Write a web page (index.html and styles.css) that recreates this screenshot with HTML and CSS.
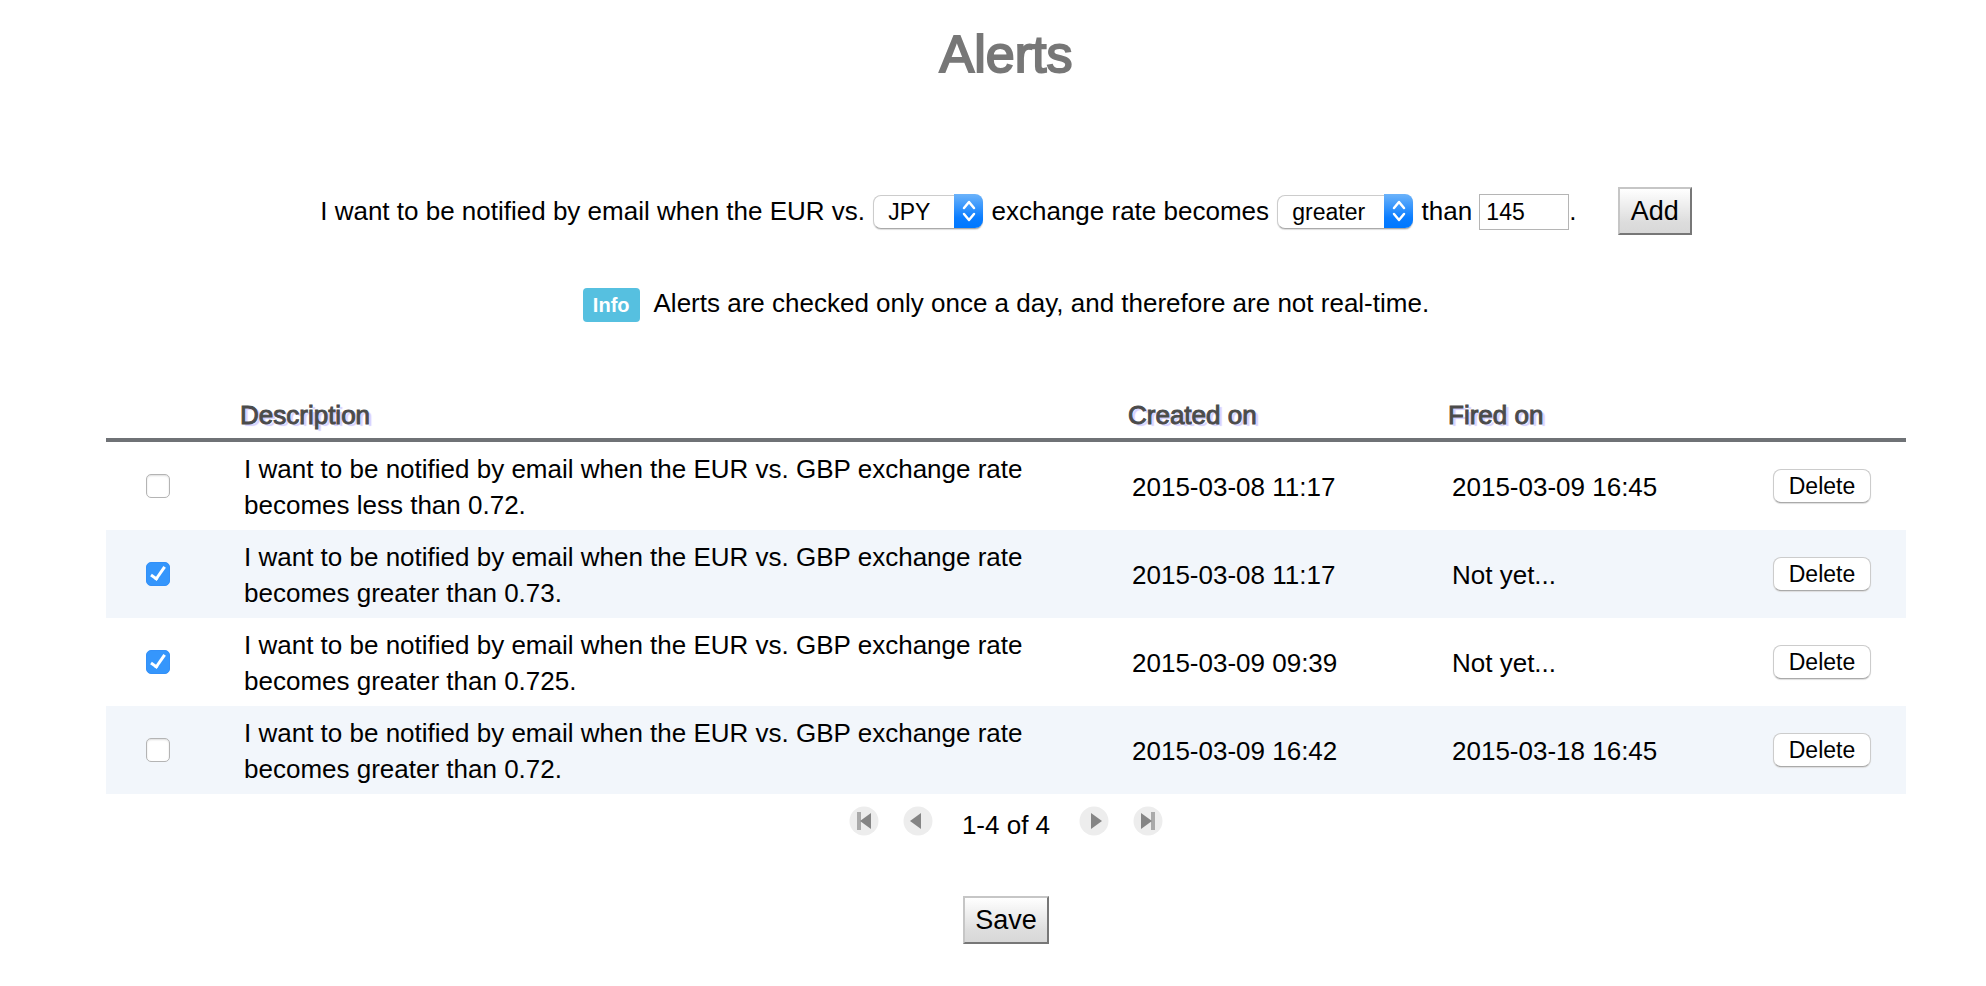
FILE: index.html
```html
<!DOCTYPE html>
<html lang="en">
	<head>
		<meta charset="UTF-8" />
		<meta name="viewport" content="width=device-width, initial-scale=1.0" />
		<title>Alerts</title>
		<link rel="stylesheet" href="styles.css">
	</head>
	<body>
		<h1>Alerts</h1>

		<form class="new-alert">
			<label for="currency">I want to be notified by email when the EUR vs.</label>
			<span class="select">
				<select id="currency" class="currency">
					<option>GBP</option>
					<option selected>JPY</option>
					<option>USD</option>
				</select>
				<svg class="arrows" viewBox="0 0 29 34"><path d="M10 14l5-6 5 6M10 20l5 6 5-6" /></svg>
			</span>
			<label for="comparison">exchange rate becomes</label>
			<span class="select">
				<select id="comparison" class="comparison">
					<option>less</option>
					<option selected>greater</option>
				</select>
				<svg class="arrows" viewBox="0 0 29 34"><path d="M10 14l5-6 5 6M10 20l5 6 5-6" /></svg>
			</span>
			<label for="rate">than</label>
			<input type="text" id="rate" class="rate" value="145">.
			<button type="button" class="button add">Add</button>
		</form>

		<p class="note"><span class="badge">Info</span>Alerts are checked only once a day, and therefore are not real-time.</p>

		<form>
			<table class="alerts">
				<colgroup>
					<col class="col-check">
					<col>
					<col class="col-created">
					<col class="col-fired">
					<col class="col-delete">
				</colgroup>
				<thead>
					<tr>
						<th></th>
						<th>Description</th>
						<th>Created on</th>
						<th>Fired on</th>
						<th></th>
					</tr>
				</thead>
				<tbody>
					<tr>
						<td class="check"><input type="checkbox" aria-labelledby="alert1"></td>
						<td id="alert1">I want to be notified by email when the EUR vs. GBP exchange rate becomes less than 0.72.</td>
						<td>2015-03-08 11:17</td>
						<td>2015-03-09 16:45</td>
						<td class="action"><button type="button" class="delete">Delete</button></td>
					</tr>
					<tr>
						<td class="check"><input type="checkbox" aria-labelledby="alert2" checked></td>
						<td id="alert2">I want to be notified by email when the EUR vs. GBP exchange rate becomes greater than 0.73.</td>
						<td>2015-03-08 11:17</td>
						<td>Not yet...</td>
						<td class="action"><button type="button" class="delete">Delete</button></td>
					</tr>
					<tr>
						<td class="check"><input type="checkbox" aria-labelledby="alert3" checked></td>
						<td id="alert3">I want to be notified by email when the EUR vs. GBP exchange rate becomes greater than 0.725.</td>
						<td>2015-03-09 09:39</td>
						<td>Not yet...</td>
						<td class="action"><button type="button" class="delete">Delete</button></td>
					</tr>
					<tr>
						<td class="check"><input type="checkbox" aria-labelledby="alert4"></td>
						<td id="alert4">I want to be notified by email when the EUR vs. GBP exchange rate becomes greater than 0.72.</td>
						<td>2015-03-09 16:42</td>
						<td>2015-03-18 16:45</td>
						<td class="action"><button type="button" class="delete">Delete</button></td>
					</tr>
				</tbody>
			</table>

			<div class="pager">
				<button type="button" class="page" aria-label="First page" disabled>
					<svg viewBox="0 0 32 32"><circle cx="16" cy="16" r="14.500" /><path class="bar" d="M9 7h4v18H9z" /><path d="M23 8v16L12 16z" /></svg>
				</button>
				<button type="button" class="page" aria-label="Previous page" disabled>
					<svg viewBox="0 0 32 32"><circle cx="16" cy="16" r="14.500" /><path d="M19 8v16L8 16z" /></svg>
				</button>
				<span class="range">1-4 of 4</span>
				<button type="button" class="page" aria-label="Next page" disabled>
					<svg viewBox="0 0 32 32"><circle cx="16" cy="16" r="14.500" /><path d="M13 8v16l11-8z" /></svg>
				</button>
				<button type="button" class="page" aria-label="Last page" disabled>
					<svg viewBox="0 0 32 32"><circle cx="16" cy="16" r="14.500" /><path class="bar" d="M19 7h4v18h-4z" /><path d="M9 8v16l11-8z" /></svg>
				</button>
			</div>

			<div class="actions">
				<button type="button" class="button">Save</button>
			</div>
		</form>
	</body>
</html>
```
FILE: styles.css
```css
body {
	margin: 0;
	padding: 23px 80px 40px 106px;
	background: #fff;
	color: #000;
	font-family: Arial, "Liberation Sans", sans-serif;
	font-size: 26px;
	line-height: 36px;
}

h1 {
	margin: 0 0 102px;
	color: #777;
	font-size: 52px;
	font-weight: normal;
	line-height: 62px;
	text-align: center;
	-webkit-text-stroke: 2px #777;
}

select,
input,
button {
	box-sizing: border-box;
	margin: 0;
	color: #000;
	font-family: inherit;
}

.new-alert {
	text-align: center;
}

.select {
	display: inline-block;
	position: relative;
	margin: 0 1px;
}

.select select {
	height: 34px;
	padding: 0 42px 0 14px;
	border: 1px solid #ccc;
	border-bottom-color: #aaa;
	border-radius: 8px;
	background: #fff;
	box-shadow: 0 1px 1px #ddd;
	font-size: 23px;
	appearance: none;
}

.currency {
	width: 110px;
}

.comparison {
	width: 136px;
}

/* blue end of the drop-down, lies over the select */
.arrows {
	position: absolute;
	top: 0;
	right: 0;
	bottom: 0;
	width: 29px;
	height: 34px;
	margin: auto 0;
	border-radius: 0 8px 8px 0;
	background: linear-gradient(#6cb3fa, #0a7dff 70%, #0078ff);
	fill: none;
	stroke: #fff;
	stroke-width: 2.5;
	stroke-linecap: round;
	stroke-linejoin: round;
	pointer-events: none;
}

.rate {
	width: 90px;
	height: 36px;
	padding: 0 6px;
	border: 1px solid #b5b5b5;
	font-size: 23px;
}

.button {
	height: 48px;
	padding: 0 10px;
	border: 2px solid;
	border-color: #c6c6c6 #777 #777 #c6c6c6;
	background: linear-gradient(#fff, #ddd 75%, #d8d8d8);
	font-size: 27px;
}

.add {
	min-width: 74px;
	margin-left: 34px;
}

.note {
	margin: 50px 0 70px;
	text-align: center;
}

.badge {
	display: inline-block;
	margin-right: 14px;
	padding: 0 10px;
	border-radius: 4px;
	background: #56c0e0;
	color: #fff;
	font-size: 20px;
	font-weight: bold;
	line-height: 34px;
}

.alerts {
	width: 100%;
	border-collapse: collapse;
	table-layout: fixed;
}

.col-check {
	width: 130px;
}

.col-created {
	width: 320px;
}

.col-fired {
	width: 294px;
}

.col-delete {
	width: 168px;
}

th {
	padding: 5px 4px;
	border-bottom: 4px solid #6f7276;
	color: #4b4b4b;
	font-weight: normal;
	text-align: left;
	text-shadow: 3px 2px 1px #d4d0ff;
	-webkit-text-stroke: 1px #4b4b4b;
}

td {
	padding: 9px 8px 7px;
}

tbody tr:nth-child(even) {
	background: #f2f6fb;
}

td.check,
td.action {
	padding-top: 8px;
	padding-bottom: 8px;
}

.check {
	padding-left: 40px;
}

.check input {
	display: block;
	width: 24px;
	height: 24px;
	border: 1px solid #b4b4b4;
	border-radius: 5px;
	background: #fff;
	box-shadow: inset 0 1px 2px #ddd;
	appearance: none;
}

.check input:checked {
	border-color: #3390f8;
	background: #3596fc;
	box-shadow: none;
}

.check input:checked::before {
	content: "";
	display: block;
	width: 5px;
	height: 13px;
	margin: 1px auto;
	border: solid #fff;
	border-width: 0 3px 3px 0;
	transform: rotate(35deg);
}

.delete {
	display: block;
	width: 98px;
	height: 34px;
	margin: 0 auto;
	padding: 0;
	border: 1px solid #ccc;
	border-bottom-color: #aaa;
	border-radius: 8px;
	background: #fff;
	box-shadow: 0 1px 1px #ddd;
	font-size: 23px;
}

.pager {
	display: flex;
	justify-content: center;
	gap: 22px;
	padding-top: 11px;
}

.page {
	width: 32px;
	height: 32px;
	padding: 0;
	border: 0;
	background: none;
}

.page svg {
	display: block;
	fill: #858585;
}

.page circle {
	fill: #ededed;
}

.page .bar {
	fill: #aaa;
}

.range {
	margin: 0 6px;
	padding-top: 2px;
}

.actions {
	padding-top: 53px;
	text-align: center;
}
```
